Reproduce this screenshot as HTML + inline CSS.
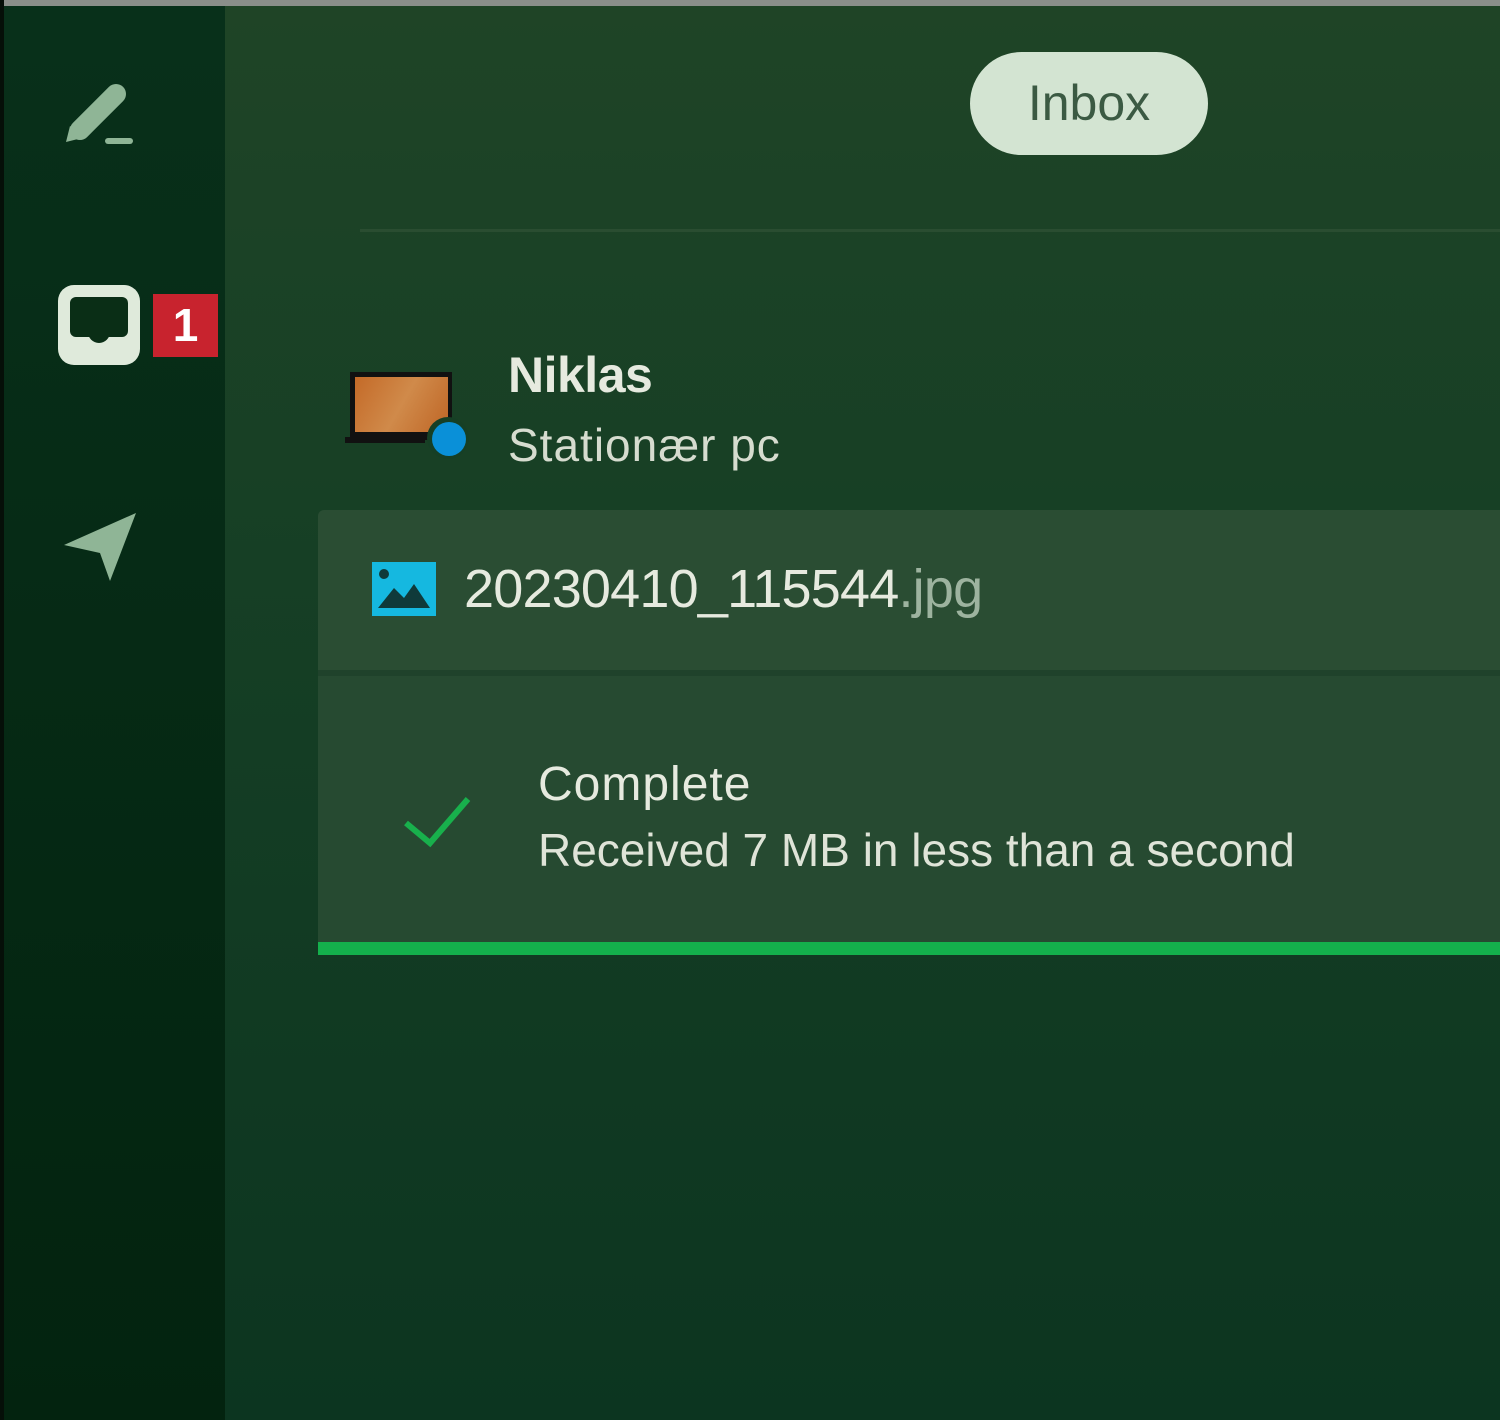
<!DOCTYPE html>
<html><head><meta charset="utf-8"><style>
*{margin:0;padding:0;box-sizing:border-box}
body{width:1500px;height:1420px;overflow:hidden;background:#0a2a14;font-family:"Liberation Sans",sans-serif;position:relative}
.top{position:absolute;left:0;top:0;width:1500px;height:6px;background:#8a8f8a}
.lb{position:absolute;left:0;top:0;width:4px;height:1420px;background:#050f08}
.side{position:absolute;left:4px;top:6px;width:221px;height:1414px;background:linear-gradient(#08301a,#03230f)}
.main{position:absolute;left:225px;top:6px;width:1275px;height:1414px;background:linear-gradient(#1f4426 0%,#163f25 40%,#0c3520 100%)}
.pill{position:absolute;left:970px;top:52px;width:238px;height:103px;border-radius:52px;background:#d3e4d2;color:#3b5a43;font-size:50px;text-align:center;line-height:103px}
.div{position:absolute;left:360px;top:229px;width:1140px;height:3px;background:#2a4d31}
.t{position:absolute;color:#e6eadf;white-space:nowrap}
</style></head><body>
<div class="main"></div>
<div class="side"></div>
<div class="top"></div><div class="lb"></div>
<svg style="position:absolute;left:60px;top:70px" width="80" height="80" viewBox="0 0 80 80"><path d="M74 26 L34 66" stroke="none"/><line x1="20" y1="60" x2="56" y2="24" stroke="#8fb596" stroke-width="20" stroke-linecap="round"/><path d="M6 72 L10 56 L22 68 Z" fill="#8fb596"/><rect x="45" y="68" width="28" height="6" rx="3" fill="#8fb596"/></svg>
<div style="position:absolute;left:58px;top:285px;width:82px;height:80px;border-radius:16px;background:#dfeadb"></div>
<div style="position:absolute;left:70px;top:297px;width:58px;height:40px;border-radius:6px;background:#0a2e16"></div>
<div style="position:absolute;left:88px;top:325px;width:22px;height:18px;border-radius:0 0 11px 11px;background:#0a2e16"></div>
<div style="position:absolute;left:153px;top:294px;width:65px;height:63px;background:#c8232e;color:#fff;font-weight:bold;font-size:46px;text-align:center;line-height:63px">1</div>
<svg style="position:absolute;left:60px;top:505px" width="82" height="82" viewBox="0 0 82 82"><path d="M4 40 L76 8 L50 76 L40 48 Z" fill="#8fb596"/></svg>
<div class="pill">Inbox</div>
<div class="div"></div>
<div style="position:absolute;left:350px;top:372px;width:102px;height:68px;background:#111;"></div>
<div style="position:absolute;left:355px;top:377px;width:93px;height:55px;background:linear-gradient(120deg,#c46a28,#d08a4a 50%,#bf6626)"></div>
<div style="position:absolute;left:345px;top:437px;width:80px;height:6px;background:#111"></div>
<div style="position:absolute;left:427px;top:417px;width:42px;height:42px;border-radius:50%;background:#163f25"></div>
<div style="position:absolute;left:432px;top:422px;width:34px;height:34px;border-radius:50%;background:#0a90d8"></div>
<div class="t" style="left:508px;top:346px;font-size:50px;font-weight:bold;letter-spacing:-0.5px">Niklas</div>
<div class="t" style="left:508px;top:418px;font-size:46px;letter-spacing:1px;color:#d6dccf">Stationær pc</div>
<div style="position:absolute;left:318px;top:510px;width:1182px;height:160px;background:#2a4d33;border-radius:6px 0 0 0"></div>
<div style="position:absolute;left:318px;top:670px;width:1182px;height:6px;background:#1f422b"></div>
<div style="position:absolute;left:318px;top:676px;width:1182px;height:266px;background:#264a31"></div>
<div style="position:absolute;left:318px;top:942px;width:1182px;height:13px;background:#14b04c"></div>
<svg style="position:absolute;left:372px;top:562px" width="64" height="54" viewBox="0 0 64 54"><rect width="64" height="54" fill="#15b8e0"/><circle cx="12" cy="12" r="5" fill="#0f3a3a"/><path d="M6 46 L22 26 L32 36 L42 22 L58 46 Z" fill="#0f3a3a"/></svg>
<div class="t" style="left:464px;top:558px;font-size:54px;letter-spacing:-0.8px">20230410_115544<span style="color:#9db39f">.jpg</span></div>
<svg style="position:absolute;left:402px;top:795px" width="70" height="55" viewBox="0 0 70 55"><path d="M4 28 L28 48 L66 4" fill="none" stroke="#18b04c" stroke-width="6"/></svg>
<div class="t" style="left:538px;top:757px;font-size:48px;letter-spacing:1px">Complete</div>
<div class="t" style="left:538px;top:823px;font-size:46px;letter-spacing:0px;color:#dfe4d8">Received 7 MB in less than a second</div>
</body></html>
